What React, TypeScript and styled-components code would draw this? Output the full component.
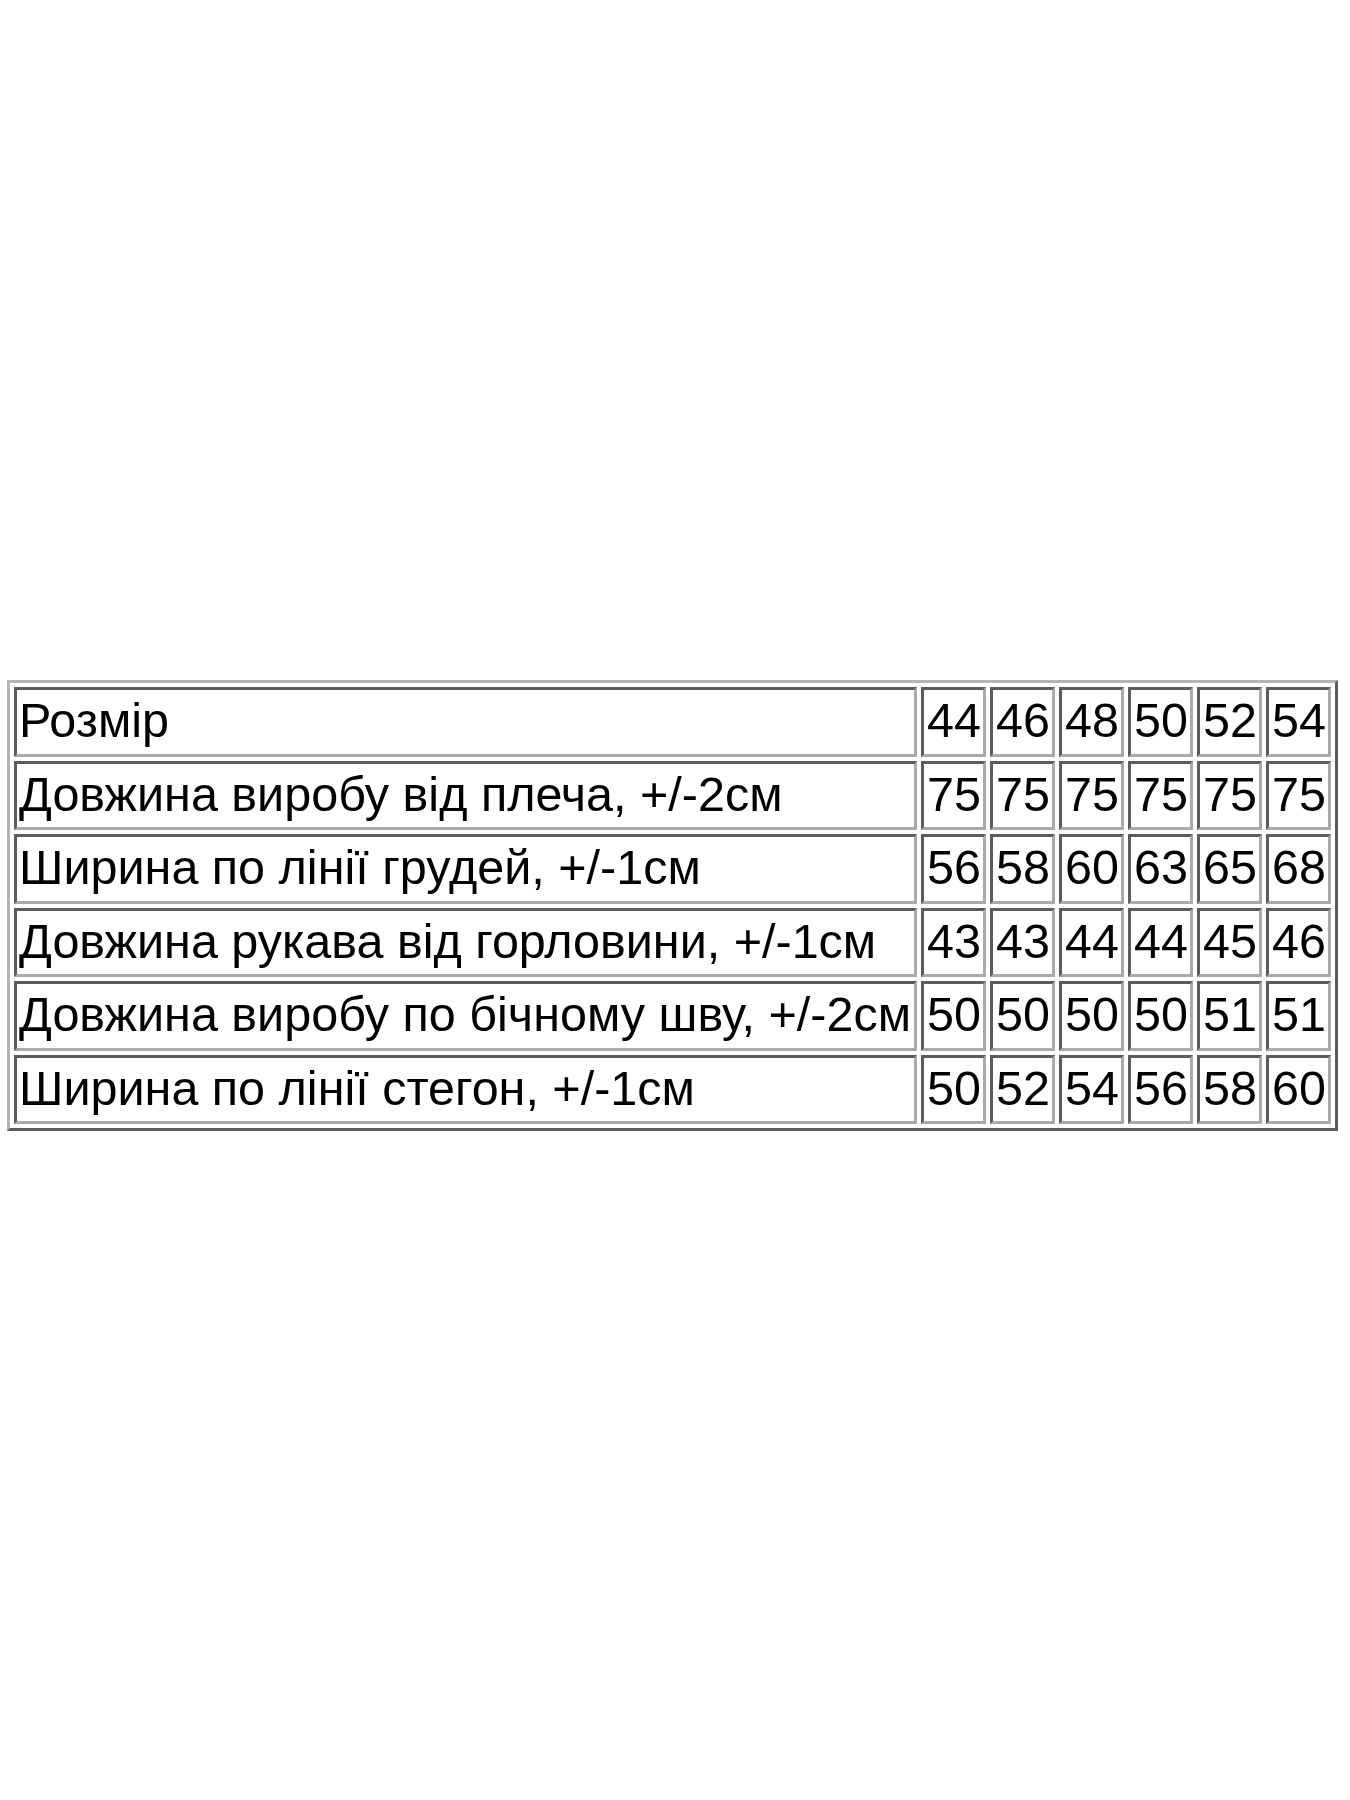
import React from "react";
import styled, { createGlobalStyle } from "styled-components";

const Global = createGlobalStyle`
  html, body {
    margin: 0;
    padding: 0;
    background: #ffffff;
  }
  body {
    width: 1350px;
    height: 1800px;
    font-family: "Liberation Sans", Arial, sans-serif;
  }
`;

const Page = styled.div`
  width: 1350px;
  height: 1800px;
  display: flex;
  align-items: flex-start;
  padding-top: 680px;
  padding-left: 7px;
  box-sizing: border-box;
`;

const Table = styled.table`
  border-collapse: separate;
  border-spacing: 4px;
  border-style: solid;
  border-width: 3px;
  border-color: #b4b4b4 #5c5c5c #5c5c5c #b4b4b4;
  table-layout: fixed;
  width: 1331px;
  font-family: "Liberation Sans", Arial, sans-serif;
  color: #000;
`;

const Cell = styled.td<{ $label?: boolean }>`
  box-sizing: border-box;
  height: 69.5px;
  width: ${(p) => (p.$label ? "903px" : "65px")};
  padding: 0 0 3px ${(p) => (p.$label ? "2px" : "3px")};
  border-style: solid;
  border-width: 3px;
  border-color: #5c5c5c #aaaaaa #aaaaaa #5c5c5c;
  font-size: 48.5px;
  line-height: 1;
  white-space: nowrap;
  overflow: hidden;
  vertical-align: middle;
  text-align: left;
`;

const rows: [string, string[]][] = [
  ["Розмір", ["44", "46", "48", "50", "52", "54"]],
  ["Довжина виробу від плеча, +/-2см", ["75", "75", "75", "75", "75", "75"]],
  ["Ширина по лінії грудей, +/-1см", ["56", "58", "60", "63", "65", "68"]],
  ["Довжина рукава від горловини, +/-1см", ["43", "43", "44", "44", "45", "46"]],
  ["Довжина виробу по бічному шву, +/-2см", ["50", "50", "50", "50", "51", "51"]],
  ["Ширина по лінії стегон, +/-1см", ["50", "52", "54", "56", "58", "60"]],
];

export default function App() {
  return (
    <>
      <Global />
      <Page>
        <Table>
          <tbody>
            {rows.map(([label, vals]) => (
              <tr key={label}>
                <Cell $label>{label}</Cell>
                {vals.map((v, i) => (
                  <Cell key={i}>{v}</Cell>
                ))}
              </tr>
            ))}
          </tbody>
        </Table>
      </Page>
    </>
  );
}
